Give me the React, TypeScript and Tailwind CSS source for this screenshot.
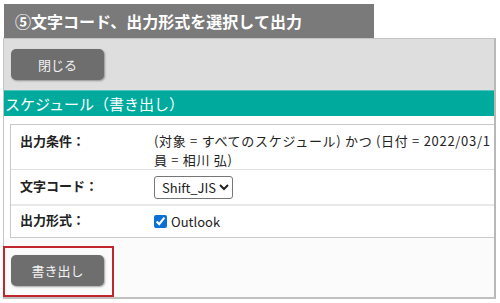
import React from "react";

export default function App() {
  const font = { fontFamily: '"Noto Sans CJK JP", "Noto Sans", sans-serif' };
  return (
    <div className="relative w-[500px] h-[303px] bg-white overflow-hidden" style={font}>
      <div className="ml-[4px] mt-[4px] w-[370px] h-[34px] bg-[#7a7a7a] flex items-center pl-[11px] text-white font-bold text-[16px] leading-none">
        ⑤文字コード、出力形式を選択して出力
      </div>
      <div className="ml-[3px] w-[493px] h-[261px] border border-[#c4c4c4] border-r-2 border-r-[#b8b8b8] border-b-2 border-b-[#c0c0c0] flex flex-col overflow-hidden">
        <div className="h-[51px] bg-[#dedede] pt-[10px] pl-[7px]">
          <button className="w-[93px] h-[31px] rounded-[5px] bg-[#6e6e6e] text-[#f2f2f2] text-[13px] shadow-[1px_1px_2px_rgba(0,0,0,0.35)]">
            閉じる
          </button>
        </div>
        <div className="h-[26px] bg-[#00ab9e] text-white text-[15px] leading-[26px] pl-[1px] border-t border-[#4fc3b8]">
          スケジュール（書き出し）
        </div>
        <div className="bg-white pt-[8px] pl-[6px]">
          <div className="border border-[#c9c9c9] border-r-0 text-[13px] text-[#222]">
            <div className="flex h-[45px] border-b border-[#e0e0e0]">
              <div className="w-[133px] shrink-0 pl-[9px] pt-[6px] font-bold">出力条件：</div>
              <div className="pl-[10px] pt-[6px] leading-[19px] whitespace-nowrap tracking-[0.7px]">
                (対象 = すべてのスケジュール) かつ (日付 = 2022/03/1
                <br />
                員 = 相川 弘)
              </div>
            </div>
            <div className="flex h-[36px] border-b-2 border-[#e8e8e8] items-center">
              <div className="w-[133px] shrink-0 pl-[9px] font-bold -mt-[3px]">文字コード：</div>
              <div className="pl-[10px]">
                <select
                  defaultValue="Shift_JIS"
                  className="h-[23px] w-[79px] border border-[#767676] rounded-[3px] bg-white text-[13px] text-[#222] pl-[3px]"
                  style={font}
                >
                  <option>Shift_JIS</option>
                  <option>UTF-8</option>
                </select>
              </div>
            </div>
            <div className="flex h-[31px] items-center">
              <div className="w-[133px] shrink-0 pl-[9px] font-bold -mt-[4px]">出力形式：</div>
              <div className="pl-[10px] flex items-center gap-[4px]">
                <input type="checkbox" defaultChecked className="w-[13px] h-[13px] accent-[#0b6fd8] m-0" />
                <span>Outlook</span>
              </div>
            </div>
          </div>
        </div>
        <div className="flex-1 bg-[#fbfbfb] pt-[17px] pl-[7px]">
          <button className="w-[93px] h-[31px] rounded-[5px] bg-[#6e6e6e] text-[#f2f2f2] text-[13px] shadow-[1px_1px_2px_rgba(0,0,0,0.35)]">
            書き出し
          </button>
        </div>
      </div>
      <div className="absolute left-[3px] top-[246px] w-[111px] h-[51px] border-2 border-[#c0262c]" />
    </div>
  );
}
